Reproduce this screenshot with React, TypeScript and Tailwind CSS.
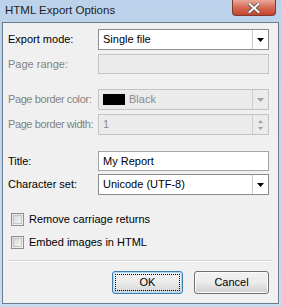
import { ReactNode } from "react";

const font = { fontFamily: '"Liberation Sans", Arial, sans-serif' };

function Arrow({ disabled }: { disabled?: boolean }) {
  return (
    <svg width="7" height="4" viewBox="0 0 7 4">
      <path d="M0 0H7L3.5 4Z" fill={disabled ? "#a0a0a0" : "#000"} />
    </svg>
  );
}

function Combo({ children, disabled }: { children: ReactNode; disabled?: boolean }) {
  return (
    <div
      className={
        "flex h-[21px] w-[171px] items-stretch border " +
        (disabled ? "border-[#c4c4c4] bg-[#ebebeb] text-[#8a8a8a]" : "border-[#8c8c8c] bg-white text-black")
      }
    >
      <div className="flex flex-1 items-center pl-[4px]">{children}</div>
      <div
        className={
          "flex w-[16px] items-center justify-center border-l " +
          (disabled ? "border-[#cfcfcf]" : "border-[#c8c8c8]")
        }
      >
        <Arrow disabled={disabled} />
      </div>
    </div>
  );
}

function Row({ label, disabled, tight, className, children }: { label: string; disabled?: boolean; tight?: boolean; className?: string; children: ReactNode }) {
  return (
    <div className={"flex items-center " + (className ?? "")}>
      <div
        className={
          "w-[95px] whitespace-nowrap pl-[5px] " +
          (tight ? "tracking-[-0.4px] " : "") +
          (disabled ? "text-[#838383]" : "text-black")
        }
      >
        {label}
      </div>
      {children}
    </div>
  );
}

function Check({ label, className }: { label: string; className?: string }) {
  return (
    <div className={"flex items-center pl-[8px] " + (className ?? "")}>
      <div className="h-[13px] w-[13px] border border-[#8f8f8f] bg-gradient-to-br from-[#dcdcdc] to-[#f7f7f7] p-[1px]">
        <div className="h-full w-full border border-[#c6c6c6] bg-gradient-to-br from-[#d8d8d8] to-[#f4f4f4]" />
      </div>
      <span className="ml-[5px] whitespace-nowrap text-black">{label}</span>
    </div>
  );
}

export default function App() {
  return (
    <div className="flex h-[307px] w-[281px] flex-col bg-gradient-to-b from-[#bcd2ea] to-[#c9dcf0] text-[11px] leading-none" style={font}>
      <div className="relative flex h-[22px] items-center pl-[5px]">
        <span className="text-[11.5px] text-[#1e1e1e]">HTML Export Options</span>
        <div className="absolute right-[5px] top-0 flex h-[16px] w-[44px] items-center justify-center rounded-b-[4px] border border-t-0 border-[#7d3a2f] bg-gradient-to-b from-[#e8a898] via-[#d56a55] to-[#c4432c]">
          <svg width="12" height="10" viewBox="0 0 12 10">
            <path d="M1.5 1L10.5 9M10.5 1L1.5 9" stroke="#4a4a4a" strokeWidth="3.4" strokeLinecap="square" />
            <path d="M1.5 1L10.5 9M10.5 1L1.5 9" stroke="#fff" strokeWidth="2" strokeLinecap="square" />
          </svg>
        </div>
      </div>
      <div className="ml-[2px] flex h-[282px] w-[277px] flex-col border border-[#6c7c90] bg-[#f0f0f0]">
        <Row label="Export mode:" className="mt-[6px]">
          <Combo>Single file</Combo>
        </Row>
        <Row label="Page range:" disabled className="mt-[4px]">
          <div className="h-[20px] w-[171px] border border-[#c4c4c4] bg-[#ebebeb]" />
        </Row>
        <Row label="Page border color:" disabled tight className="mt-[15px]">
          <Combo disabled>
            <div className="h-[11px] w-[22px] bg-black" />
            <span className="ml-[4px]">Black</span>
          </Combo>
        </Row>
        <Row label="Page border width:" disabled tight className="mt-[4px]">
          <div className="flex h-[21px] w-[171px] items-stretch border border-[#c4c4c4] bg-[#ebebeb] text-[#8a8a8a]">
            <div className="flex flex-1 items-center pl-[4px]">1</div>
            <div className="flex w-[16px] flex-col items-center justify-center gap-[4px] border-l border-[#cfcfcf]">
              <svg width="5" height="3" viewBox="0 0 5 3">
                <path d="M0 3H5L2.5 0Z" fill="#a0a0a0" />
              </svg>
              <svg width="5" height="3" viewBox="0 0 5 3">
                <path d="M0 0H5L2.5 3Z" fill="#a0a0a0" />
              </svg>
            </div>
          </div>
        </Row>
        <Row label="Title:" className="mt-[16px]">
          <div className="flex h-[20px] w-[171px] items-center border border-[#a5a5a5] bg-white pl-[4px] text-black">My Report</div>
        </Row>
        <Row label="Character set:" className="mt-[3px]">
          <Combo>Unicode (UTF-8)</Combo>
        </Row>
        <Check label="Remove carriage returns" className="mt-[18px]" />
        <Check label="Embed images in HTML" className="mt-[10px]" />
        <div className="mx-[5px] mt-[11px] h-[2px] border-t border-b border-t-[#d5d5d5] border-b-white" />
        <div className="mt-[9px] flex justify-end gap-[11px] pr-[9px]">
          <div className="flex h-[23px] w-[71px] items-center justify-center rounded-[3px] border border-[#3c7fb1] bg-gradient-to-b from-[#f2f2f2] via-[#ebebeb] to-[#d4d4d4] p-[2px] shadow-[inset_0_0_0_1px_#a8dcf8]">
            <div className="flex h-full w-full items-center justify-center border border-dotted border-black text-black">OK</div>
          </div>
          <div className="flex h-[23px] w-[75px] items-center justify-center rounded-[3px] border border-[#707070] bg-gradient-to-b from-[#f2f2f2] via-[#ebebeb] to-[#cfcfcf] text-black shadow-[inset_0_0_0_1px_#fcfcfc]">
            Cancel
          </div>
        </div>
      </div>
    </div>
  );
}
